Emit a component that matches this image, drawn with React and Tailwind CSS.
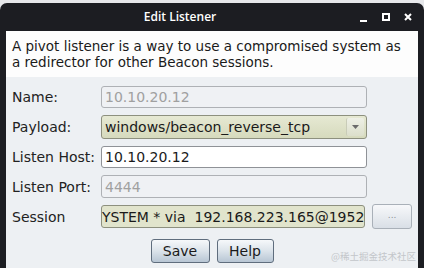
export default function App() {
  const label = "w-[89px] shrink-0 text-[14px] leading-none text-[#222]";
  return (
    <div className="relative h-[268px] w-[424px] overflow-hidden bg-[#e6e7ea] pt-[3px] font-['DejaVu_Sans',sans-serif]">
      <div className="flex h-full flex-col rounded-t-[7px] bg-[#1c1d22] px-[6px]">
        {/* title bar */}
        <div className="flex h-[28px] shrink-0 items-center">
          <div className="flex-1 text-center font-['Open_Sans',sans-serif] text-[12px] font-semibold text-white">Edit Listener</div>
          <div className="flex w-[64px] items-center gap-[14px] pl-[6px]">
            <div className="flex h-[8px] w-[8px] items-end">
              <div className="h-[2px] w-[7px] translate-y-[1px] bg-white" />
            </div>
            <div className="h-[8px] w-[8px] border-[2px] border-white" />
            <svg width="8" height="8" viewBox="0 0 8 8">
              <path d="M1 1 L7 7 M7 1 L1 7" stroke="white" strokeWidth="2" />
            </svg>
          </div>
        </div>
        {/* description */}
        <div className="h-[46px] shrink-0 bg-[#fdfdfd] px-[6px] pt-[7px] text-[13.5px] leading-[16px] text-[#1a1a1a]">
          A pivot listener is a way to use a compromised system as
          <br />
          a redirector for other Beacon sessions.
        </div>
        {/* form panel */}
        <div className="flex flex-1 flex-col bg-[#edf0f3] px-[6px] pt-[8px]">
          <div className="flex flex-col gap-[7px]">
            <div className="flex h-[23px] items-center">
              <div className={label}>Name:</div>
              <div className="flex h-[22px] w-[266px] items-center rounded-[3px] border border-[#aeb1b5] bg-[#eff1f4] pl-[3px] text-[14px] leading-none text-[#a0a0a0]">
                10.10.20.12
              </div>
            </div>
            <div className="flex h-[23px] items-center">
              <div className={label}>Payload:</div>
              <div className="flex h-[24px] w-[266px] items-center rounded-[3px] border border-[#8d907e] bg-gradient-to-b from-[#e6e9d3] to-[#d6dabd] text-[14px] leading-none text-[#1a1a1a]">
                <div className="flex-1 pl-[3px]">windows/beacon_reverse_tcp</div>
                <div className="mr-[2px] flex h-[18px] w-[18px] items-center justify-center rounded-[2px] border-l border-[#c9ccb8] bg-gradient-to-b from-[#eef0e6] to-[#dcdfcb]">
                  <svg width="7" height="4" viewBox="0 0 7 4">
                    <path d="M0 0 L7 0 L3.5 4 Z" fill="#6b6b6b" />
                  </svg>
                </div>
              </div>
            </div>
            <div className="flex h-[23px] items-center">
              <div className={label}>Listen Host:</div>
              <div className="flex h-[22px] w-[266px] items-center rounded-[3px] border border-[#8f9297] bg-white pl-[3px] text-[14px] leading-none text-[#1a1a1a]">
                10.10.20.12
              </div>
            </div>
            <div className="flex h-[23px] items-center">
              <div className={label}>Listen Port:</div>
              <div className="flex h-[23px] w-[266px] items-center rounded-[3px] border border-[#aeb1b5] bg-[#eff1f4] pl-[3px] text-[14px] leading-none text-[#a0a0a0]">
                4444
              </div>
            </div>
            <div className="flex h-[23px] items-center">
              <div className={label}>Session</div>
              <div className="flex h-[23px] w-[265px] items-center overflow-hidden whitespace-pre rounded-[3px] border border-[#8d907e] bg-[#e1e4cc] text-[14px] leading-none text-[#1a1a1a]">
                YSTEM * via  192.168.223.165@1952
              </div>
              <div className="ml-[7px] flex h-[25px] w-[40px] items-center justify-center rounded-[3px] border border-[#a9b0b8] bg-gradient-to-b from-[#f7f8fa] to-[#d9dfe6] pb-[3px] text-[9px] leading-none text-[#8b9097]">
                ...
              </div>
            </div>
          </div>
          <div className="mt-[11px] flex justify-center gap-[7px]">
            <div className="flex h-[24px] w-[59px] items-center justify-center rounded-[3px] border border-[#5f6d7d] bg-gradient-to-b from-[#f6f8fa] via-[#dbe3ea] to-[#b8c6d4] text-[14px] leading-none text-[#1a1a1a]">
              Save
            </div>
            <div className="flex h-[24px] w-[57px] items-center justify-center rounded-[3px] border border-[#5f6d7d] bg-gradient-to-b from-[#f6f8fa] via-[#dbe3ea] to-[#b8c6d4] text-[14px] leading-none text-[#1a1a1a]">
              Help
            </div>
          </div>
        </div>
      </div>
      <div className="absolute bottom-[7px] right-[8px] font-['Noto_Sans_CJK_SC',sans-serif] text-[9.5px] leading-none text-[#c3c6ca]">
        @稀土掘金技术社区
      </div>
    </div>
  );
}
